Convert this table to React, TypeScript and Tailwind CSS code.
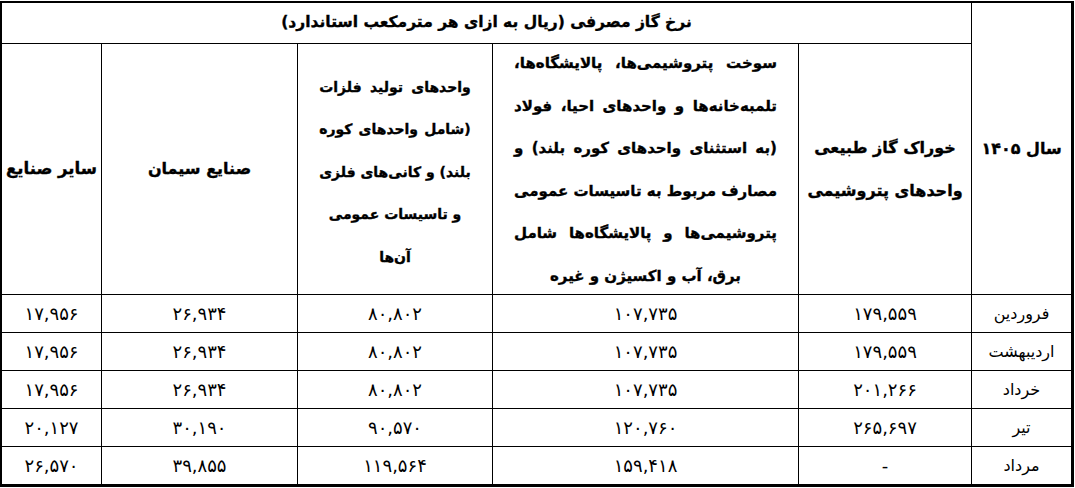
const rows = [
  { month: 'فروردین', vals: ['۱۷۹,۵۵۹', '۱۰۷,۷۳۵', '۸۰,۸۰۲', '۲۶,۹۳۴', '۱۷,۹۵۶'] },
  { month: 'اردیبهشت', vals: ['۱۷۹,۵۵۹', '۱۰۷,۷۳۵', '۸۰,۸۰۲', '۲۶,۹۳۴', '۱۷,۹۵۶'] },
  { month: 'خرداد', vals: ['۲۰۱,۲۶۶', '۱۰۷,۷۳۵', '۸۰,۸۰۲', '۲۶,۹۳۴', '۱۷,۹۵۶'] },
  { month: 'تیر', vals: ['۲۶۵,۶۹۷', '۱۲۰,۷۶۰', '۹۰,۵۷۰', '۳۰,۱۹۰', '۲۰,۱۲۷'] },
  { month: 'مرداد', vals: ['-', '۱۵۹,۴۱۸', '۱۱۹,۵۶۴', '۳۹,۸۵۵', '۲۶,۵۷۰'] },
];

const fuelLines = [
  'سوخت پتروشیمی‌ها، پالایشگاه‌ها،',
  'تلمبه‌خانه‌ها و واحدهای احیا، فولاد',
  '(به استثنای واحدهای کوره بلند) و',
  'مصارف مربوط به تاسیسات عمومی',
  'پتروشیمی‌ها و پالایشگاه‌ها شامل',
];

const metalLines = ['واحدهای تولید فلزات', '(شامل واحدهای کوره', 'بلند) و کانی‌های فلزی'];

const cell = 'bg-white flex items-center justify-center whitespace-nowrap';
// header cells: bold with a touch of stroke to get the heavy print look
const head = `${cell} font-bold [-webkit-text-stroke:0.35px_black]`;

export default function App() {
  return (
    <div className="w-[1075px] h-[488px] bg-white pt-px font-['DejaVu_Sans',sans-serif] text-black">
      <div
        dir="rtl"
        className="w-[1074px] grid grid-cols-[99px_172px_305px_194px_195px_99px] grid-rows-[40px_250px_37px_37px_37px_37px_37px] gap-px bg-black border-t-2 border-l-2 border-r-[3px] border-b-[3px] border-black"
      >
        {/* header */}
        <div className={`${head} row-span-2 text-[16px]`}>سال ۱۴۰۵</div>
        <div className={`${head} col-span-5 text-[15.5px]`}>
          نرخ گاز مصرفی (ریال به ازای هر مترمکعب استاندارد)
        </div>
        <div className={`${head} flex-col text-[16px] leading-[43px]`}>
          <div>خوراک گاز طبیعی</div>
          <div>واحدهای پتروشیمی</div>
        </div>
        <div className={`${head} text-[15px] leading-[42.5px] pt-px`}>
          <div className="w-max">
            {fuelLines.map((l) => (
              <div key={l} className="text-justify [text-align-last:justify]">
                {l}
              </div>
            ))}
            <div className="text-center">برق، آب و اکسیژن و غیره</div>
          </div>
        </div>
        <div className={`${head} text-[14px] leading-[42.5px] pt-[6px]`}>
          <div className="w-max">
            {metalLines.map((l) => (
              <div key={l} className="text-justify [text-align-last:justify]">
                {l}
              </div>
            ))}
            <div className="text-center">و تاسیسات عمومی</div>
            <div className="text-center">آن‌ها</div>
          </div>
        </div>
        <div className={`${head} text-[16px]`}>صنایع سیمان</div>
        <div className={`${head} text-[16.5px]`}>سایر صنایع</div>

        {/* data rows */}
        {rows.map((r) => (
          <>
            <div key={r.month} className={`${cell} text-[16px]`}>
              {r.month}
            </div>
            {r.vals.map((v, i) => (
              <div key={r.month + i} className={`${cell} text-[18px]`}>
                {v}
              </div>
            ))}
          </>
        ))}
      </div>
    </div>
  );
}
